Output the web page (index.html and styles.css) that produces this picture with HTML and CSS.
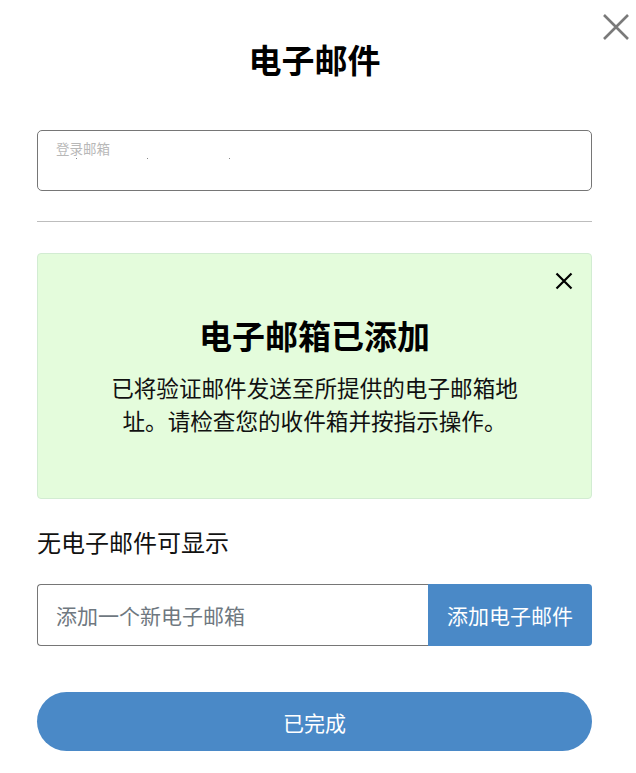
FILE: index.html
```html
<!DOCTYPE html>
<html lang="zh-CN">
<head>
<meta charset="utf-8">
<title>电子邮件</title>
<link rel="stylesheet" href="styles.css">
</head>
<body>
<div class="dialog">
  <button class="dialog-close" aria-label="关闭">
    <svg width="28" height="28" viewBox="0 0 28 28"><path d="M2 2 L26 26 M26 2 L2 26" stroke="#7a7a7a" stroke-width="2.6" fill="none"/></svg>
  </button>
  <h1 class="title">电子邮件</h1>
  <div class="login-field">
    <span class="login-label">登录邮箱</span>
    <span class="login-dots"><i></i><i></i><i></i></span>
  </div>
  <hr class="divider">
  <div class="alert">
    <button class="alert-close" aria-label="关闭">
      <svg width="18" height="18" viewBox="0 0 18 18"><path d="M1.5 1.5 L16.5 16.5 M16.5 1.5 L1.5 16.5" stroke="#000" stroke-width="2.2" fill="none"/></svg>
    </button>
    <h2 class="alert-title">电子邮箱已添加</h2>
    <p class="alert-text">已将验证邮件发送至所提供的电子邮箱地址。请检查您的收件箱并按指示操作。</p>
  </div>
  <p class="empty">无电子邮件可显示</p>
  <div class="add-group">
    <input class="add-input" type="text" placeholder="添加一个新电子邮箱">
    <button class="add-btn">添加电子邮件</button>
  </div>
  <button class="done-btn">已完成</button>
</div>
</body>
</html>
```
FILE: styles.css
```css
* { box-sizing: border-box; }
html, body { margin: 0; padding: 0; background: #fff; }
body {
  font-family: "Noto Sans CJK SC", "Noto Sans", sans-serif;
  color: #000;
}
.dialog {
  position: relative;
  width: 636px;
  padding: 0 44px 0 37px;
  display: flex;
  flex-direction: column;
}
.dialog-close {
  position: absolute;
  top: 13px;
  right: 6px;
  width: 28px;
  height: 28px;
  padding: 0;
  border: 0;
  background: none;
  display: flex;
}
.title {
  margin: 39px 0 0;
  height: 40px;
  line-height: 40px;
  font-size: 33px;
  font-weight: 700;
  text-align: center;
}
.login-field {
  margin-top: 51px;
  height: 61px;
  border: 1px solid #767676;
  border-radius: 5px;
  padding: 9px 0 0 18px;
  position: relative;
}
.login-label {
  display: block;
  font-size: 13.5px;
  line-height: 16px;
  color: #b8b8b8;
}
.login-dots i {
  position: absolute;
  top: 27px;
  width: 1px;
  height: 1px;
  background: #888;
}
.login-dots i:nth-child(1) { left: 38px; }
.login-dots i:nth-child(2) { left: 109px; }
.login-dots i:nth-child(3) { left: 191px; }
.divider {
  margin: 30px 0 0;
  border: 0;
  height: 1px;
  background: #bdbdbd;
}
.alert {
  position: relative;
  margin-top: 31px;
  height: 246px;
  background: #e4fcdc;
  border: 1px solid #d2ecd2;
  border-radius: 4px;
  padding-top: 58px;
  display: flex;
  flex-direction: column;
  align-items: center;
}
.alert-close {
  position: absolute;
  top: 18px;
  right: 18px;
  width: 18px;
  height: 18px;
  padding: 0;
  border: 0;
  background: none;
  display: flex;
}
.alert-title {
  margin: 0;
  line-height: 46px;
  font-size: 33px;
  font-weight: 700;
  text-align: center;
}
.alert-text {
  margin: 13px 0 0;
  max-width: 416px;
  font-size: 22.6px;
  line-height: 33px;
  text-align: center;
  color: #111;
}
.empty {
  margin: 28px 0 0;
  line-height: 30px;
  font-size: 24px;
  color: #111;
}
.add-group {
  margin-top: 27px;
  height: 62px;
  display: flex;
}
.add-input {
  flex: 1;
  min-width: 0;
  height: 62px;
  border: 1px solid #767676;
  border-right: 0;
  border-radius: 4px 0 0 4px;
  padding: 0 18px;
  font-family: inherit;
  font-size: 21px;
  color: #333;
  outline: none;
}
.add-input::placeholder { color: #6f7880; }
.add-btn {
  width: 164px;
  height: 62px;
  border: 0;
  border-radius: 0 4px 4px 0;
  background: #4a89c7;
  color: #fff;
  font-family: inherit;
  font-size: 21px;
  padding: 0;
}
.done-btn {
  margin-top: 46px;
  height: 59px;
  border: 0;
  border-radius: 30px;
  background: #4a89c7;
  color: #fff;
  font-family: inherit;
  font-size: 21px;
  padding: 0;
}
```
